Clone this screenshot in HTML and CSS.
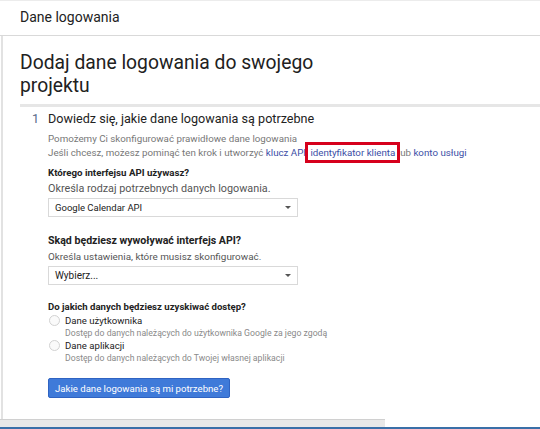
FILE: index.html
```html
<!DOCTYPE html>
<html lang="pl">
<head>
<meta charset="utf-8">
<link rel="stylesheet" href="styles.css">
</head>
<body>
<div class="page">
  <header class="topbar">Dane logowania</header>
  <main class="content">
    <h1 class="title"><span class="title-text">Dodaj dane logowania do swojego projektu</span></h1>
    <section class="step">
      <div class="step-head"><span class="num">1</span><span class="step-title">Dowiedz się, jakie dane logowania są potrzebne</span></div>
      <div class="step-body">
        <p class="intro">Pomożemy Ci skonfigurować prawidłowe dane logowania<br>Jeśli chcesz, możesz pominąć ten krok i utworzyć <a class="lnk">klucz API</a>, <a class="lnk hl">identyfikator klienta</a> lub <a class="lnk">konto usługi</a></p>
        <div class="field f1">
          <div class="label l1">Którego interfejsu API używasz?</div>
          <div class="desc d1">Określa rodzaj potrzebnych danych logowania.</div>
          <div class="select"><span class="sv s1">Google Calendar API</span><span class="caret"></span></div>
        </div>
        <div class="field f2">
          <div class="label l2">Skąd będziesz wywoływać interfejs API?</div>
          <div class="desc d2">Określa ustawienia, które musisz skonfigurować.</div>
          <div class="select"><span class="sv s2">Wybierz...</span><span class="caret"></span></div>
        </div>
        <div class="field f3">
          <div class="label l3">Do jakich danych będziesz uzyskiwać dostęp?</div>
          <div class="radio"><span class="circle"></span><div><div class="rlabel">Dane użytkownika</div><div class="rdesc">Dostęp do danych należących do użytkownika Google za jego zgodą</div></div></div>
          <div class="radio"><span class="circle"></span><div><div class="rlabel">Dane aplikacji</div><div class="rdesc">Dostęp do danych należących do Twojej własnej aplikacji</div></div></div>
        </div>
        <button class="btn">Jakie dane logowania są mi potrzebne?</button>
      </div>
    </section>
  </main>
  <div class="bottom"><div class="scroll"></div></div>
</div>
</body>
</html>
```
FILE: styles.css
```css
html, body { margin: 0; padding: 0; background: #fff; }
body { font-family: Roboto, "Liberation Sans", Arial, sans-serif; color: #222; width: 540px; height: 429px; overflow: hidden; }
.page { display: flex; flex-direction: column; height: 429px; }
.topbar { flex: none; height: 36px; box-sizing: border-box; border-top: 1px solid #ececec; border-bottom: 1px solid #d9d9d9; padding: 7px 0 0 20px; font-size: 14px; line-height: 18px; color: #222; }
.content { flex: 1; border-left: 2px solid #e2e2e2; margin-left: 1px; padding-left: 17px; }
.title { font-weight: 400; font-size: 19.3px; line-height: 23px; margin: 15px 0 0; padding-bottom: 7px; border-bottom: 3px solid #e6e6e6; color: #212121; }
.title-text { display: block; max-width: 330px; }
.step { padding-top: 4px; }
.step-head { display: flex; align-items: baseline; font-size: 12.6px; line-height: 16px; }
.num { width: 16px; margin-left: 12px; color: #5a6a8a; }
.step-title { color: #222; }
.step-body { padding-left: 28px; }
.intro { margin: 5px 0 0; font-size: 9.75px; line-height: 14px; color: #777; }
.lnk { color: #3b4ea6; }
.hl { outline: 3px solid #d6001c; outline-offset: 2px; }
.f1 { margin-top: 6px; }
.f2 { margin-top: 17px; }
.f3 { margin-top: 15px; }
.label { font-weight: 700; color: #222; line-height: 14px; }
.l1 { font-size: 9.7px; }
.l2 { font-size: 10.6px; }
.l3 { font-size: 9.6px; }
.desc { color: #555; margin-top: 2px; line-height: 14px; }
.d1 { font-size: 10.8px; }
.d2 { font-size: 9.9px; }
.select { width: 250px; height: 19px; box-sizing: border-box; border: 1px solid #d9d9d9; margin-top: 2px; display: flex; align-items: center; justify-content: space-between; padding: 0 6px 0 6px; color: #222; }
.s1 { font-size: 9.5px; }
.s2 { font-size: 10px; }
.caret { width: 0; height: 0; border-left: 3px solid transparent; border-right: 3px solid transparent; border-top: 3px solid #555; }
.radio { display: flex; align-items: flex-start; }
.circle { width: 11px; height: 11px; box-sizing: border-box; border: 1px solid #d2d2d2; background: #fafafa; border-radius: 50%; margin: 1px 5px 0 1px; flex: none; }
.rlabel { font-size: 9.6px; color: #222; line-height: 13px; }
.rdesc { font-size: 8.7px; color: #8a8a8a; line-height: 12px; }
.btn { display: block; margin-top: 14px; background: #3f7ad9; color: #fff; border: 1px solid #2f63c2; border-radius: 2px; font-family: Roboto, sans-serif; font-size: 9.6px; height: 20px; width: 182px; padding: 0; }
.bottom { flex: none; height: 8px; border-bottom: 2px solid #3a6fa8; }
.scroll { width: 385px; height: 8px; box-sizing: border-box; background: #e8e8e8; border-top: 1px solid #d0d0d0; }
```
